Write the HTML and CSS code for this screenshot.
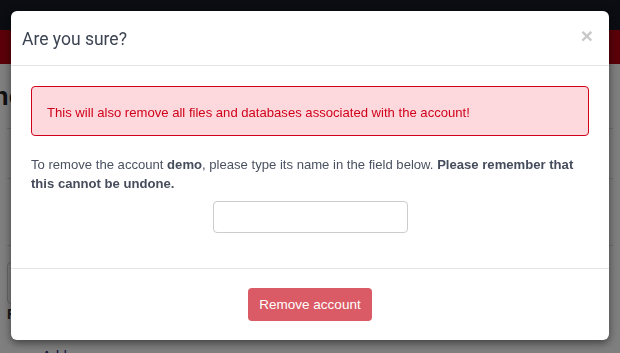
FILE: index.html
```html
<!DOCTYPE html>
<html lang="en">
<head>
  <meta charset="UTF-8" />
  <title>Remove account</title>
  <link rel="stylesheet" href="styles.css">
</head>
<body>

<div class="page">
  <div class="navbar"></div>
  <div class="banner"></div>
  <div class="content">
    <h1 class="page-title">Sync</h1>
    <div class="row-line"></div>
    <div class="row-line second"></div>
    <div class="row-line third"></div>
    <div class="field-box"></div>
    <div class="field-label">Fi</div>
    <div class="add-link">Add a new one</div>
  </div>
</div>

<div class="backdrop"></div>

<div class="modal">
  <div class="modal-header">
    <h4 class="modal-title">Are you sure?</h4>
    <span class="close">&times;</span>
  </div>
  <div class="modal-body">
    <div class="alert">This will also remove all files and databases associated with the account!</div>
    <p class="note">To remove the account <b>demo</b>, please type its name in the field below. <b>Please remember that this cannot be undone.</b></p>
    <div class="confirm-row">
      <input type="text" class="confirm-input" />
    </div>
  </div>
  <div class="modal-footer">
    <button class="btn-danger">Remove account</button>
  </div>
</div>

</body>
</html>
```

FILE: styles.css
```css
body {
  margin: 0;
  font-family: "Liberation Sans", Arial, sans-serif;
  color: #4a5161;
  background: #fff;
  overflow: hidden;
  height: 353px;
}

.navbar {
  height: 30px;
  background: #161b25;
}

.banner {
  height: 34px;
  background: #b70012;
}

.content {
  position: relative;
  padding: 0 7px;
}

.page-title {
  margin: 0 0 0 -46px;
  padding-top: 16px;
  font-size: 26px;
  line-height: 32px;
  color: #222;
}

.row-line {
  height: 1px;
  background: #ddd;
  margin-top: 16px;
}

.row-line.second { margin-top: 49px; }
.row-line.third { margin-top: 66px; }

.field-box {
  margin-top: 16px;
  width: 200px;
  height: 40px;
  border: 1px solid #ccc;
  border-radius: 4px;
}

.field-label {
  font-size: 14px;
  font-weight: bold;
  margin-top: 2px;
  color: #333;
}

.add-link {
  margin-top: 26px;
  margin-left: 35px;
  font-size: 14px;
  color: #1a237e;
}

.backdrop {
  position: fixed;
  inset: 0;
  background: rgba(0, 0, 0, 0.5);
}

.modal {
  position: absolute;
  top: 11px;
  left: 11px;
  width: 598px;
  background: #fff;
  border-radius: 6px;
  box-shadow: 0 3px 9px rgba(0, 0, 0, 0.5);
}

.modal-header {
  height: 54px;
  border-bottom: 1px solid #e5e5e5;
  display: flex;
  align-items: center;
  justify-content: space-between;
  padding: 0 16px 0 11px;
}

.modal-title {
  margin: 0;
  font-family: Roboto, "Liberation Sans", sans-serif;
  font-weight: 400;
  font-size: 17.5px;
  color: #3c4352;
  padding-top: 2px;
}

.close {
  font-size: 21px;
  font-weight: bold;
  color: #c8c8c8;
  line-height: 1;
  margin-top: -6px;
}

.modal-body {
  padding: 20px 20px 35px;
}

.alert {
  height: 50px;
  box-sizing: border-box;
  padding: 18px 15px 0;
  background: #fdd8dc;
  border: 1px solid #d0021b;
  border-radius: 4px;
  color: #d0021b;
  font-size: 13.1px;
  line-height: 16px;
}

.note {
  margin: 19px 0 0;
  font-size: 13.1px;
  line-height: 19px;
  color: #4a5161;
}

.note b {
  color: #454c5b;
}

.confirm-row {
  display: flex;
  justify-content: center;
  margin-top: 8px;
}

.confirm-input {
  width: 195px;
  height: 32px;
  box-sizing: border-box;
  border: 1px solid #ccc;
  border-radius: 4px;
  font-size: 14px;
  padding: 6px 10px;
}

.modal-footer {
  border-top: 1px solid #e5e5e5;
  padding: 19px 0 19px;
  display: flex;
  justify-content: center;
}

.btn-danger {
  width: 124px;
  height: 33px;
  background: #da5a65;
  color: #fff;
  border: none;
  border-radius: 4px;
  font-family: "Liberation Sans", Arial, sans-serif;
  font-size: 13.5px;
  padding: 0;
}
```
